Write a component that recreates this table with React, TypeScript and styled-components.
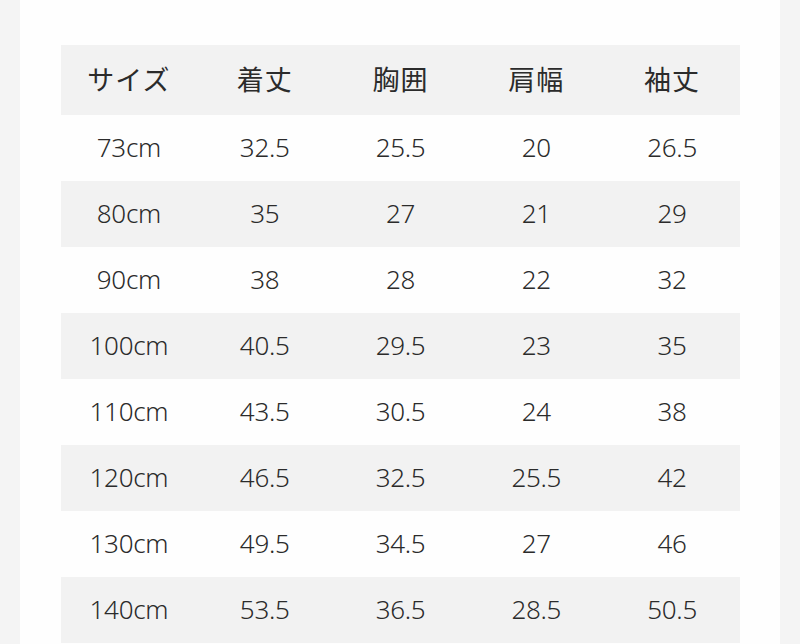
import React from 'react';
import styled, { createGlobalStyle } from 'styled-components';

const GlobalStyle = createGlobalStyle`
  html, body {
    margin: 0;
    padding: 0;
    background: #f4f4f4;
  }
`;

const Page = styled.div`
  display: flex;
  justify-content: center;
  width: 800px;
  height: 644px;
  overflow: hidden;
`;

const Panel = styled.div`
  width: 760px;
  background: #fefefe;
  padding: 45px 40px 0 41px;
  box-sizing: border-box;
`;

const Table = styled.div`
  display: flex;
  flex-direction: column;
`;

const Row = styled.div<{ $shade: boolean; $head?: boolean }>`
  display: grid;
  grid-template-columns: repeat(5, minmax(0, 1fr));
  align-items: center;
  height: ${(p) => (p.$head ? 70 : 66)}px;
  background: ${(p) => (p.$shade ? '#f2f2f2' : 'transparent')};
`;

const Cell = styled.div<{ $head?: boolean }>`
  text-align: center;
  color: #2b2b2b;
  font-family: ${(p) =>
    p.$head
      ? '"Noto Sans CJK JP", sans-serif'
      : '"Noto Sans", "Liberation Sans", sans-serif'};
  font-size: ${(p) => (p.$head ? 27 : 26)}px;
  font-weight: ${(p) => (p.$head ? 400 : 300)};
  letter-spacing: ${(p) => (p.$head ? '1px' : '-0.3px')};
  margin-top: ${(p) => (p.$head ? -4 : -3)}px;
`;

const headers = ['サイズ', '着丈', '胸囲', '肩幅', '袖丈'];

const rows = [
  ['73cm', '32.5', '25.5', '20', '26.5'],
  ['80cm', '35', '27', '21', '29'],
  ['90cm', '38', '28', '22', '32'],
  ['100cm', '40.5', '29.5', '23', '35'],
  ['110cm', '43.5', '30.5', '24', '38'],
  ['120cm', '46.5', '32.5', '25.5', '42'],
  ['130cm', '49.5', '34.5', '27', '46'],
  ['140cm', '53.5', '36.5', '28.5', '50.5'],
];

export default function App() {
  return (
    <>
      <GlobalStyle />
      <Page>
        <Panel>
          <Table>
            <Row $shade $head>
              {headers.map((h) => (
                <Cell key={h} $head>
                  {h}
                </Cell>
              ))}
            </Row>
            {rows.map((r, i) => (
              <Row key={r[0]} $shade={i % 2 === 1}>
                {r.map((v, j) => (
                  <Cell key={j}>{v}</Cell>
                ))}
              </Row>
            ))}
          </Table>
        </Panel>
      </Page>
    </>
  );
}
